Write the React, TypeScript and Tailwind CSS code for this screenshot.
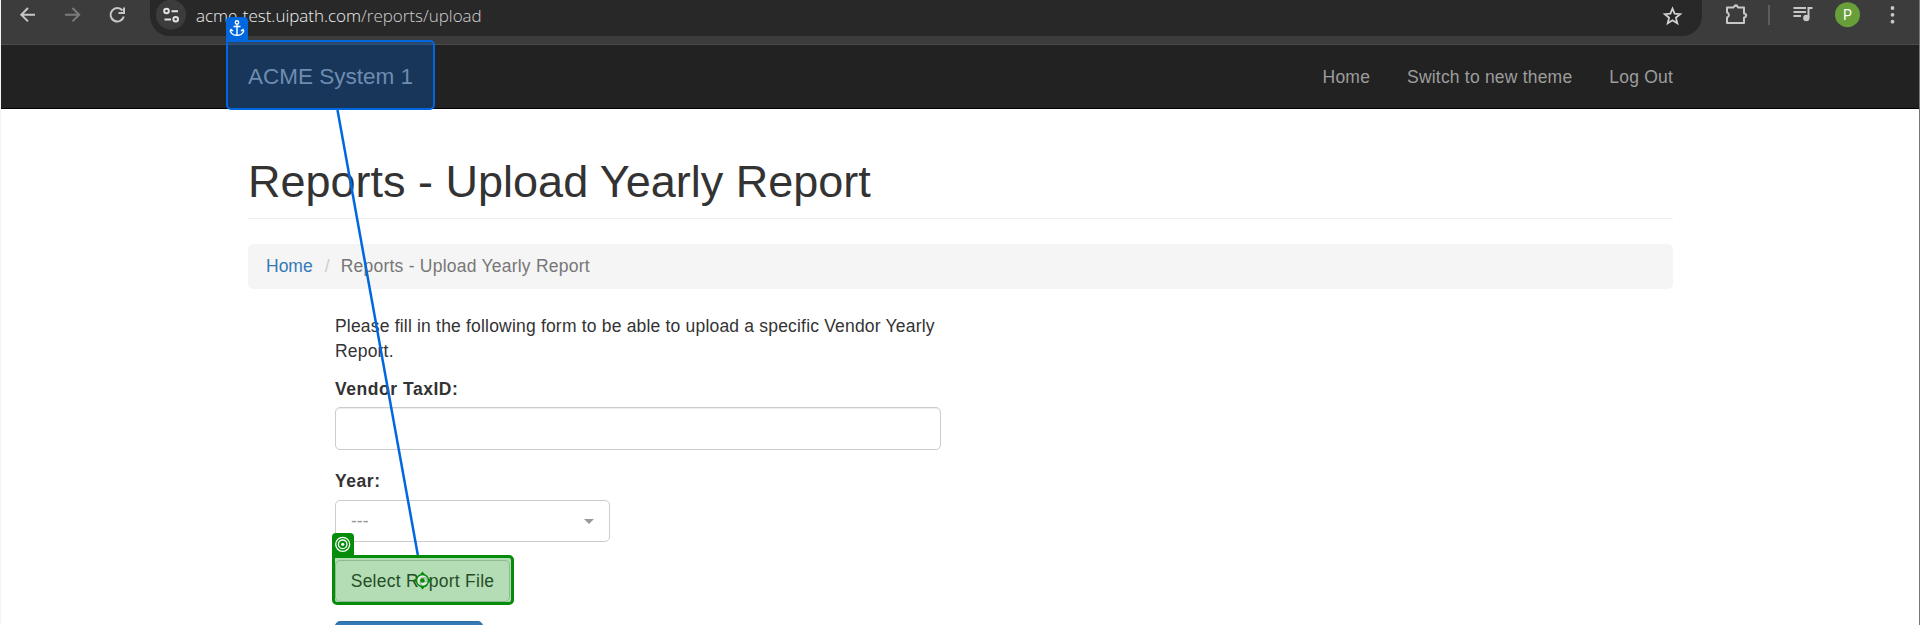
import type { ReactNode } from "react";

function Toolbar() {
  return (
    <header className="flex h-[45px] w-full border-b border-[#4a4a4a] bg-[#3c3c3c]">
      <svg className="h-[30px] w-[149px] shrink-0" viewBox="1 0 149 30" fill="none" strokeWidth="2">
        <path d="M35 14.7H21.5M28 8l-6.700 6.700L28 21.400" stroke="#c7c7c7" />
        <path d="M65 14.700H79M72.500 8l6.700 6.700-6.700 6.700" stroke="#7b7b7b" />
        <path d="M122.500 10.500A6.700 6.700 0 1 0 123.800 16.500" stroke="#c7c7c7" />
        <path d="M124 7.500V13h-5.500" stroke="#c7c7c7" />
      </svg>
      <div className="flex h-9 w-[1552px] shrink-0 items-start rounded-b-[20px] bg-[#282828]">
        <svg className="ml-[6px] shrink-0" width="30" height="30" viewBox="0 0 30 30" fill="none" stroke="#e3e3e3" strokeWidth="2">
          <circle cx="15" cy="14.700" r="15" fill="#3c3c3c" stroke="none" />
          <circle cx="10.500" cy="11" r="2.300" />
          <path d="M15.500 11.300H22M8.500 19.500H15" />
          <circle cx="19.700" cy="19.300" r="2.300" />
        </svg>
        <div className="ml-[10px] flex h-8 w-[1466px] shrink-0 items-center whitespace-nowrap font-['Open_Sans',sans-serif] text-[17px] font-light leading-8 tracking-[-0.020px] text-[#f0f0f0]">
          acme-test.uipath.com<span className="text-[#d0d0d0]">/reports/upload</span>
        </div>
        <svg className="mt-[5px] shrink-0" width="22" height="22" viewBox="0 0 22 22" fill="none" stroke="#d0d0d0" strokeWidth="1.800">
          <path d="M10.500 3.500l2.100 5.100 5.600.5-4.300 3.600 1.400 5.500-4.800-3-4.800 3 1.400-5.500-4.300-3.600 5.600-.5z" />
        </svg>
      </div>
      <svg className="h-[30px] w-[217px] shrink-0" viewBox="1 0 217 30" fill="none">
        <path d="M27 7.500h5.500a2.300 2.300 0 0 1 4.500 0h6v6a2 2 0 0 1 0 4v5.500H26v-5.500a2.600 2.600 0 0 0 0-5V7.500z" stroke="#c7c7c7" strokeWidth="2" strokeLinejoin="round" />
        <path d="M35 4.300a2.300 2.300 0 0 1 2.300 2.300h-4.600A2.300 2.300 0 0 1 35 4.300zM44 13l2.500 2.200L44 17.500z" fill="#c7c7c7" />
        <path d="M68 5V25" stroke="#5d5d5d" strokeWidth="2" />
        <path d="M92.500 8H105M92.500 12H105M92.500 16H100" stroke="#c7c7c7" strokeWidth="1.800" />
        <path d="M107.500 18V8H111.500" stroke="#c7c7c7" strokeWidth="2" />
        <circle cx="105.300" cy="18" r="3.200" fill="#c7c7c7" />
        <circle cx="146.500" cy="14.700" r="12.500" fill="#689f38" />
        <text x="146.500" y="19.500" textAnchor="middle" fill="white" fontSize="14" fontFamily="Roboto, sans-serif">P</text>
        <g fill="#c7c7c7">
          <circle cx="191.500" cy="8" r="1.900" />
          <circle cx="191.500" cy="14.800" r="1.900" />
          <circle cx="191.500" cy="21.700" r="1.900" />
        </g>
      </svg>
    </header>
  );
}

function NavBar() {
  return (
    <nav className="flex h-16 items-start justify-between border-b border-black bg-[#222222] pr-[246px] pl-[247px] leading-[25px] text-[#9d9d9d]">
      <span className="pt-[19px] text-[22.500px]">ACME System 1</span>
      <div className="flex gap-[37px] pt-5 tracking-[0.200px]">
        <span>Home</span>
        <span>Switch to new theme</span>
        <span>Log Out</span>
      </div>
    </nav>
  );
}

function Label({ children }: { children: ReactNode }) {
  return <label className="block h-[30px] font-bold leading-[25px] tracking-[0.540px]">{children}</label>;
}

function Overlay() {
  return (
    <>
      <svg className="pointer-events-none absolute top-0 left-0" width="1920" height="625" viewBox="1 0 1920 625">
        <path d="M337.500 110L418 556" stroke="#0067df" strokeWidth="2.500" />
      </svg>
      <div className="absolute top-[40px] left-[225px] h-[70px] w-[209px] rounded-[5px] rounded-tl-none border-2 border-[#0067df] bg-[#0067df]/30" />
      <div className="absolute top-[17px] left-[225px] h-[23px] w-[22px] rounded-t bg-[#0067df]">
        <svg width="22" height="23" viewBox="0 0 22 23" fill="none" stroke="white" strokeWidth="1.400">
          <circle cx="11" cy="5.500" r="1.700" />
          <path d="M11 7.200V18M7.500 9.500h7M4.700 12.500v2.500c1.200 2.500 3.500 3.300 6.300 3.300s5.100-.8 6.300-3.300v-2.500M4 14.500l1-2 2 1.500M18 14.500l-1-2-2 1.500" />
        </svg>
      </div>
      <div className="absolute top-[555px] left-[331px] h-[50px] w-[182px] rounded-[5px] rounded-tl-none border-[3px] border-[#058c0b] bg-[#058c0b]/30" />
      <div className="absolute top-[533px] left-[331px] h-[23px] w-[22px] rounded-t bg-[#058c0b]">
        <svg width="22" height="23" viewBox="0 0 22 23" fill="none" stroke="white" strokeWidth="1.300">
          <circle cx="10.700" cy="11.300" r="7" />
          <circle cx="10.700" cy="11.300" r="4.300" />
          <circle cx="10.700" cy="11.300" r="1.600" fill="white" stroke="none" />
        </svg>
      </div>
      <svg className="absolute top-[571px] left-[412px]" width="19" height="19" viewBox="0 0 19 19">
        <path d="M9.500.5l2.500 3H7zM9.500 18.500l2.500-3H7zM.5 9.500l3-2.500v5zM18.500 9.500l-3-2.500v5z" fill="#058c0b" />
        <circle cx="9.500" cy="9.500" r="6" fill="white" fillOpacity=".6" stroke="#058c0b" strokeWidth="1.500" />
        <circle cx="9.500" cy="9.500" r="2.300" fill="#058c0b" />
      </svg>
    </>
  );
}

export default function App() {
  return (
    <div className="relative h-[625px] w-[1920px] overflow-hidden border-r border-l border-r-[#777] border-l-[#f4f4f4] bg-white font-['Liberation_Sans',Arial,sans-serif] text-[17.500px] leading-[25px] text-[#333]">
      <Toolbar />
      <NavBar />
      <main className="mx-[247px] w-[1425px]">
        <h1 className="h-[110px] border-b border-[#eee] pt-[48px] text-[45px] leading-[50px]">Reports - Upload Yearly Report</h1>
        <ol className="mt-[25px] flex h-[45px] items-center rounded-[5px] bg-[#f5f5f5] px-[18px]">
          <li className="text-[#337ab7]">Home</li>
          <li className="w-[28px] pl-[12px] text-[#ccc]">/</li>
          <li className="tracking-[0.230px] text-[#777]">Reports - Upload Yearly Report</li>
        </ol>
        <form className="ml-[87px] w-[606px] pt-[25px]">
          <p className="mb-[13px] tracking-[0.190px]">Please fill in the following form to be able to upload a specific Vendor Yearly Report.</p>
          <Label>Vendor TaxID:</Label>
          <div className="h-[43px] rounded-[5px] border border-[#ccc] shadow-[inset_0_1px_1px_rgba(0,0,0,0.075)]" />
          <div className="pt-[19px]">
            <Label>Year:</Label>
            <div className="mt-px flex h-[42px] w-[275px] items-center justify-between rounded-[5px] border border-[#ccc] pr-[15px] pl-[15px] text-[#999]">
              <span>---</span>
              <svg width="10" height="5" viewBox="0 0 10 5"><path d="M0 0h10L5 5z" fill="#999" /></svg>
            </div>
          </div>
          <div className="mt-[18px] flex h-[42px] w-[175px] items-center justify-center rounded-[5px] border border-[#ccc] tracking-[0.250px]">Select Report File</div>
          <div className="mt-[19px] h-[42px] w-[148px] rounded-[5px] border border-[#2e6da4] bg-[#337ab7]" />
        </form>
      </main>
      <Overlay />
    </div>
  );
}
